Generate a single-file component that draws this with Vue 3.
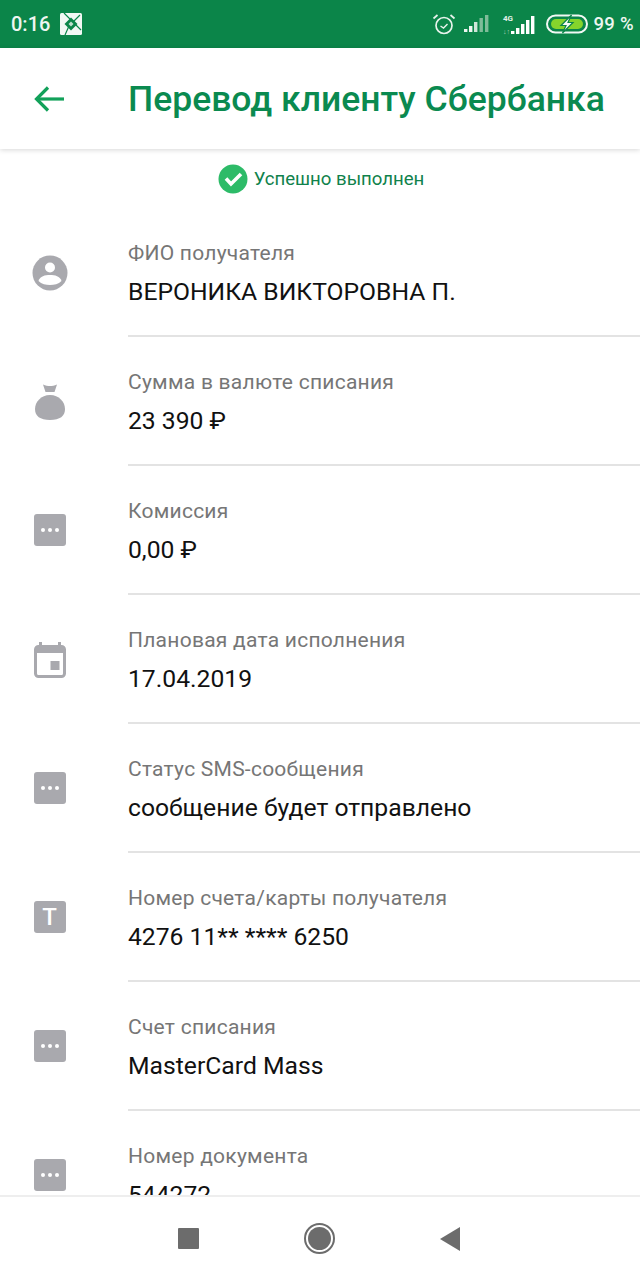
<script setup>
const rows = [
  { icon: 'person', label: 'ФИО получателя', value: 'ВЕРОНИКА ВИКТОРОВНА П.' },
  { icon: 'bag', label: 'Сумма в валюте списания', value: '23 390 ₽' },
  { icon: 'dots', label: 'Комиссия', value: '0,00 ₽' },
  { icon: 'cal', label: 'Плановая дата исполнения', value: '17.04.2019' },
  { icon: 'dots', label: 'Статус SMS-сообщения', value: 'сообщение будет отправлено' },
  { icon: 't', label: 'Номер счета/карты получателя', value: '4276 11** **** 6250' },
  { icon: 'dots', label: 'Счет списания', value: 'MasterCard Mass' },
  { icon: 'dots', label: 'Номер документа', value: '544272' },
]
</script>

<template>
  <div class="screen">
    <div class="statusbar">
      <div class="sb-left">
        <span class="time">0:16</span>
        <svg class="sb-app" width="22" height="22" viewBox="0 0 22 22">
          <rect width="22" height="22" rx="1.5" fill="#f2f8f4" />
          <path d="M4 0 L21 17 M20 2 L13 9 M9 13 L5 22" fill="none" stroke="#0b8549" stroke-width="1.200" />
          <path d="M11 4.500 L17.500 11 L11 17.500 L4.500 11 Z" fill="#0b8549" />
          <path d="M11 8.500 L13.500 11 L11 13.500 L8.500 11 Z" fill="#bfe0cd" />
        </svg>
      </div>
      <div class="sb-right">
        <svg width="24" height="24" viewBox="0 0 24 24" fill="none" stroke="#e8f3ec" stroke-width="1.700">
          <circle cx="12" cy="13.500" r="8" />
          <path d="M8.500 14 L11.500 16 L15.500 12" stroke-width="1.400" />
          <path d="M1.500 6.500 L5.500 3 M22.500 6.500 L18.500 3" />
        </svg>
        <svg class="sig1" width="25" height="18" viewBox="0 0 25 18">
          <rect x="0" y="14" width="3.400" height="3" fill="#eef6f1" />
          <rect x="5" y="11" width="3.400" height="6" fill="#eef6f1" />
          <rect x="10" y="7" width="3.400" height="10" fill="#cfe5d8" />
          <rect x="15.500" y="3" width="3.400" height="14" fill="#7fbc99" />
          <rect x="21" y="0" width="3.400" height="17" fill="#7fbc99" />
        </svg>
        <svg class="sig2" width="36" height="22" viewBox="0 0 36 22">
          <text x="3" y="7.500" class="mini">4G</text>
          <text x="3" y="20.500" class="mini dim">↓↑</text>
          <rect x="11" y="18" width="3.400" height="3" fill="#fff" />
          <rect x="16" y="15" width="3.400" height="6" fill="#fff" />
          <rect x="21" y="11" width="3.400" height="10" fill="#fff" />
          <rect x="26" y="7" width="3.400" height="14" fill="#fff" />
          <rect x="31" y="3" width="3.400" height="18" fill="#fff" />
        </svg>
        <svg class="batt" width="42" height="20" viewBox="0 0 42 20">
          <rect x="1" y="1.500" width="40" height="17" rx="8.500" fill="none" stroke="#f2f8f4" stroke-width="2" />
          <rect x="5" y="5" width="32" height="10" rx="5" fill="#86d42c" />
          <path d="M25.500 1 L15 11.500 L20 11.500 L16.500 19 L27 8.500 L22 8.500 Z" fill="#f6fbf7" stroke="#0b8549" stroke-width="1.200" />
        </svg>
        <span class="pct">99 %</span>
      </div>
    </div>

    <header class="appbar">
      <svg class="back" width="32" height="28" viewBox="0 0 32 28" fill="none" stroke="#12a15a" stroke-width="3.200">
        <path d="M30 14 H3" />
        <path d="M14 2.500 L2.500 14 L14 25.500" />
      </svg>
      <h1 class="title">Перевод клиенту Сбербанка</h1>
    </header>

    <main class="content">
      <div class="done">
        <svg width="30" height="30" viewBox="0 0 30 30">
          <circle cx="15" cy="15" r="14.500" fill="#2dbb68" />
          <path d="M8 14.500 L13 20 L23 10" fill="none" stroke="#fff" stroke-width="3.600" />
        </svg>
        <span>Успешно выполнен</span>
      </div>

      <div v-for="row in rows" :key="row.label" class="row">
        <div class="icon">
          <svg v-if="row.icon === 'person'" width="36" height="36" viewBox="0 0 36 36">
            <circle cx="18" cy="18" r="17.500" fill="#a9a9ae" />
            <circle cx="18" cy="12.500" r="5" fill="#fff" />
            <path d="M6.500 26 C8 21 13 20 18 20 C23 20 28 21 29.500 26 C26.500 29 22 30 18 30 C14 30 9.500 29 6.500 26 Z" fill="#fff" />
          </svg>
          <svg v-else-if="row.icon === 'bag'" width="30" height="36" viewBox="0 0 30 36">
            <path d="M8 0.500 C10.500 1.500 13 2 15 2 C17 2 19.500 1.500 22 0.500 L19.500 8 H10.500 Z" fill="#a9a9ae" />
            <path d="M15 11 C24 11 30 18 30 25 C30 32 25 36 15 36 C5 36 0 32 0 25 C0 18 6 11 15 11 Z" fill="#a9a9ae" />
          </svg>
          <div v-else-if="row.icon === 'dots'" class="tile dots"><i></i><i></i><i></i></div>
          <svg v-else-if="row.icon === 'cal'" width="32" height="36" viewBox="0 0 32 36">
            <rect x="5" y="0" width="3" height="6" fill="#a9a9ae" />
            <rect x="24" y="0" width="3" height="6" fill="#a9a9ae" />
            <rect x="1.500" y="4.500" width="29" height="30" rx="3" fill="#fff" stroke="#a9a9ae" stroke-width="3" />
            <rect x="2" y="4" width="28" height="7" fill="#a9a9ae" />
            <rect x="16.500" y="19" width="9" height="9" fill="#a9a9ae" />
          </svg>
          <div v-else class="tile letter">T</div>
        </div>
        <div class="body">
          <div class="label">{{ row.label }}</div>
          <div class="value">{{ row.value }}</div>
        </div>
      </div>
    </main>

    <nav class="navbar">
      <span class="nav-square"></span>
      <span class="nav-circle"><i></i></span>
      <svg width="20" height="24" viewBox="0 0 20 24"><path d="M20 0 V24 L0 12 Z" fill="#6c6c6c" /></svg>
    </nav>
  </div>
</template>

<style scoped>
.screen {
  width: 640px;
  height: 1280px;
  display: flex;
  flex-direction: column;
  overflow: hidden;
  background: #fff;
  font-family: Roboto, "Liberation Sans", sans-serif;
}
.statusbar {
  height: 48px;
  flex: none;
  background: #0b8549;
  display: flex;
  align-items: center;
  justify-content: space-between;
  padding: 0 6px 0 11px;
  color: #eef6f1;
}
.sb-left, .sb-right { display: flex; align-items: center; }
.time { font-size: 20px; font-weight: 500; }
.sb-app { margin-left: 10px; }
.sig1 { margin-left: 8px; }
.sig2 { margin-left: 11px; }
.batt { margin-left: 10px; }
.mini { font-size: 8px; font-weight: 700; fill: #e4f1e9; font-family: Roboto, sans-serif; }
.mini.dim { font-size: 7px; fill: #a8d2b9; }
.pct { margin-left: 6px; font-size: 18.500px; font-weight: 500; letter-spacing: 0.300px; }
.appbar {
  height: 101px;
  flex: none;
  display: flex;
  align-items: center;
  background: #fff;
  box-shadow: 0 1px 5px rgba(0, 0, 0, 0.16);
  position: relative;
  z-index: 1;
}
.back { margin-left: 34px; flex: none; }
.title {
  margin: 0 0 0 62px;
  font-size: 35.500px;
  font-weight: 500;
  color: #0a8a50;
  white-space: nowrap;
}
.content { flex: 1; min-height: 0; overflow: hidden; }
.done {
  height: 59px;
  display: flex;
  align-items: center;
  justify-content: center;
  gap: 6px;
  padding: 1px 0 0 2px;
  box-sizing: border-box;
  font-size: 18.600px;
  color: #10824c;
}
.row { display: flex; height: 129px; }
.icon {
  width: 99px;
  flex: none;
  margin-right: 29px;
  display: flex;
  justify-content: center;
  align-items: flex-start;
  padding-top: 47px;
  box-sizing: border-box;
}
.tile {
  width: 32px;
  height: 32px;
  border-radius: 3px;
  background: #a9a9ae;
  display: flex;
  align-items: center;
  justify-content: center;
}
.dots { margin-top: 1px; gap: 3px; }
.dots i { width: 4px; height: 4px; border-radius: 50%; background: #fff; }
.letter { margin-top: 1px; color: #fff; font-size: 24px; font-weight: 500; }
.body {
  flex: 1;
  min-width: 0;
  border-bottom: 2px solid #e3e3e3;
  padding-top: 33px;
}
.label { font-size: 21px; line-height: 24px; color: #767676; letter-spacing: 0.250px; }
.value { margin-top: 12px; font-size: 24.700px; line-height: 30px; color: #111; }
.navbar {
  height: 85px;
  flex: none;
  display: flex;
  align-items: center;
  justify-content: center;
  gap: 105px;
  padding-right: 3px;
  background: #fff;
  border-top: 2px solid #eeeeee;
  box-sizing: border-box;
}
.nav-square { width: 21px; height: 21px; background: #6c6c6c; border-radius: 1px; }
.nav-circle {
  width: 31px;
  height: 31px;
  box-sizing: border-box;
  border: 2px solid #6c6c6c;
  border-radius: 50%;
  display: flex;
  align-items: center;
  justify-content: center;
}
.nav-circle i { width: 23px; height: 23px; border-radius: 50%; background: #6c6c6c; }
</style>
